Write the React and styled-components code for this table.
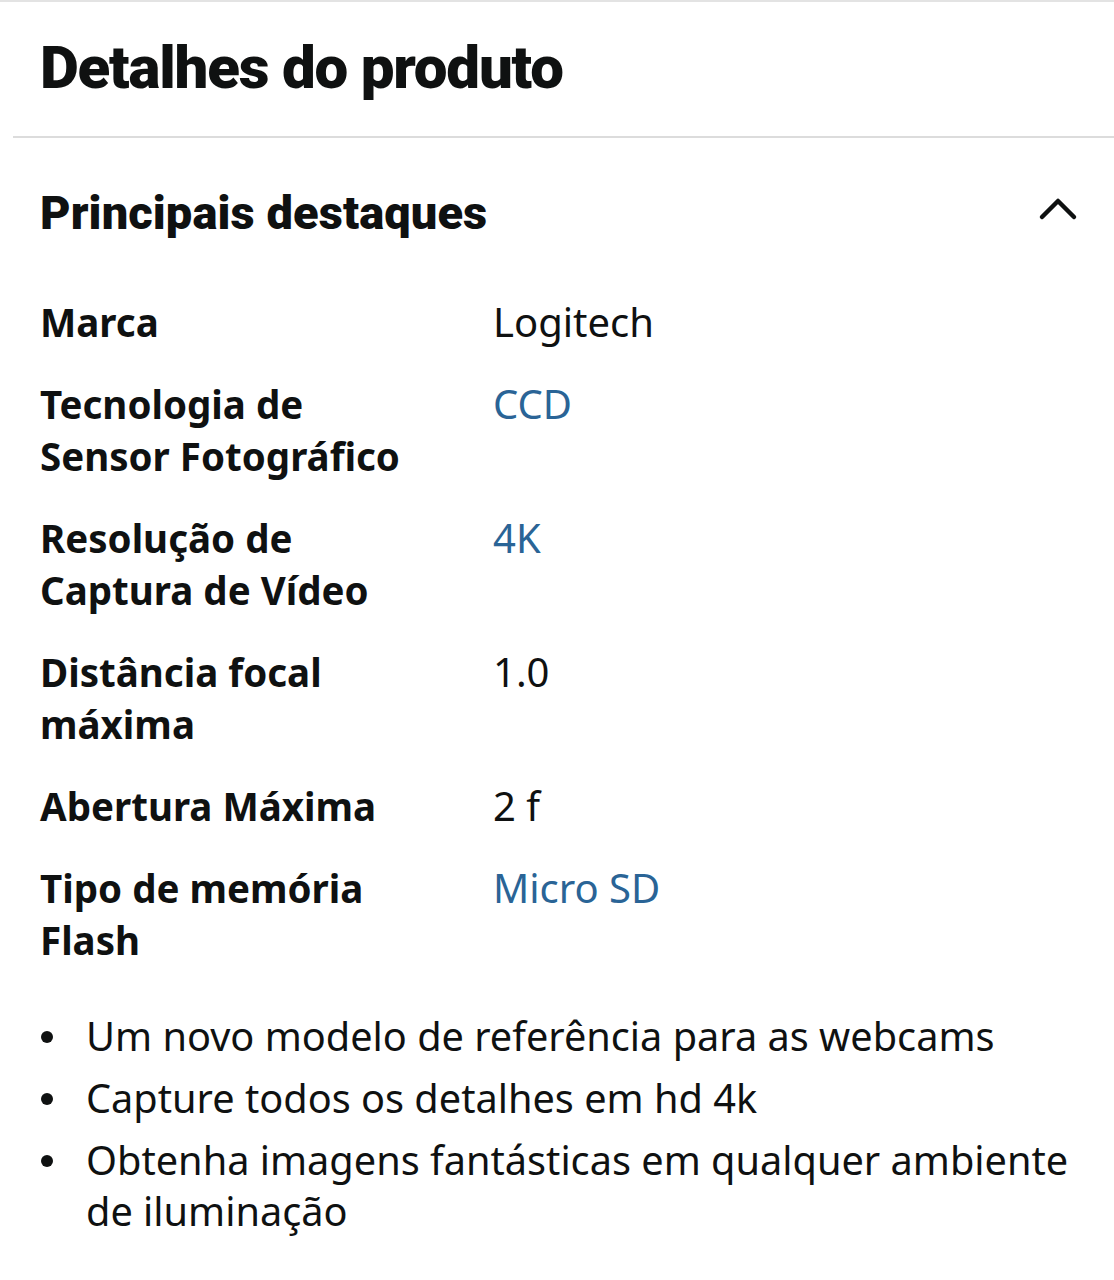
import React from "react";
import styled, { createGlobalStyle } from "styled-components";

const GlobalStyle = createGlobalStyle`
  body {
    margin: 0;
    background: #fff;
    color: #0f1111;
    font-family: "Noto Sans", "Open Sans", sans-serif;
  }
`;

const Page = styled.div`
  border-top: 2px solid #e3e3e3;
  padding-bottom: 40px;
`;

const Title = styled.h1`
  margin: 0;
  padding: 30px 0 0 40px;
  height: 104px;
  font-family: Roboto, "Liberation Sans", sans-serif;
  font-weight: 900;
  font-size: 60px;
  letter-spacing: -1.2px;
  line-height: 72px;
  box-sizing: border-box;
`;

const Divider = styled.hr`
  margin: 30px 0 0 13px;
  border: 0;
  border-top: 2px solid #dcdcdc;
`;

const SectionHead = styled.div`
  display: flex;
  align-items: center;
  justify-content: space-between;
  padding: 40px 36px 0 40px;
`;

const SectionTitle = styled.h2`
  margin: 0;
  font-family: Roboto, "Liberation Sans", sans-serif;
  font-weight: 900;
  font-size: 47px;
  letter-spacing: 0.1px;
  line-height: 70px;
`;

const Chevron = styled.svg`
  width: 40px;
  height: 28px;
  margin-top: -8px;
`;

const Specs = styled.div`
  display: grid;
  grid-template-columns: 380px 1fr;
  column-gap: 73px;
  row-gap: 30px;
  padding: 48px 40px 0 40px;
  line-height: 52px;
`;

const Label = styled.div`
  font-weight: 700;
  font-size: 38.5px;
`;

const Value = styled.div`
  font-size: 40px;
  color: ${(p) => (p.$link ? "#2a6496" : "#0f1111")};
`;

const Bullets = styled.ul`
  margin: 45px 0 0 0;
  padding: 0 40px 0 86px;
  font-size: 39.7px;
  line-height: 51px;
  list-style: none;
`;

const Bullet = styled.li`
  position: relative;
  margin-bottom: 11px;

  &::before {
    content: "";
    position: absolute;
    left: -45px;
    top: 20px;
    width: 12px;
    height: 12px;
    border-radius: 50%;
    background: #0f1111;
  }
`;

const specs = [
  { label: "Marca", value: "Logitech" },
  { label: "Tecnologia de Sensor Fotográfico", value: "CCD", link: true },
  { label: "Resolução de Captura de Vídeo", value: "4K", link: true },
  { label: "Distância focal máxima", value: "1.0" },
  { label: "Abertura Máxima", value: "2 f" },
  { label: "Tipo de memória Flash", value: "Micro SD", link: true },
];

const highlights = [
  "Um novo modelo de referência para as webcams",
  "Capture todos os detalhes em hd 4k",
  "Obtenha imagens fantásticas em qualquer ambiente de iluminação",
];

export default function App() {
  return (
    <Page>
      <GlobalStyle />
      <Title>Detalhes do produto</Title>
      <Divider />
      <SectionHead>
        <SectionTitle>Principais destaques</SectionTitle>
        <Chevron viewBox="0 0 40 28">
          <path
            d="M4 22 L20 6 L36 22"
            fill="none"
            stroke="#0f1111"
            strokeWidth="4.5"
            strokeLinecap="round"
            strokeLinejoin="round"
          />
        </Chevron>
      </SectionHead>
      <Specs>
        {specs.map((s) => (
          <React.Fragment key={s.label}>
            <Label>{s.label}</Label>
            <Value $link={s.link}>{s.value}</Value>
          </React.Fragment>
        ))}
      </Specs>
      <Bullets>
        {highlights.map((h) => (
          <Bullet key={h}>{h}</Bullet>
        ))}
      </Bullets>
    </Page>
  );
}
